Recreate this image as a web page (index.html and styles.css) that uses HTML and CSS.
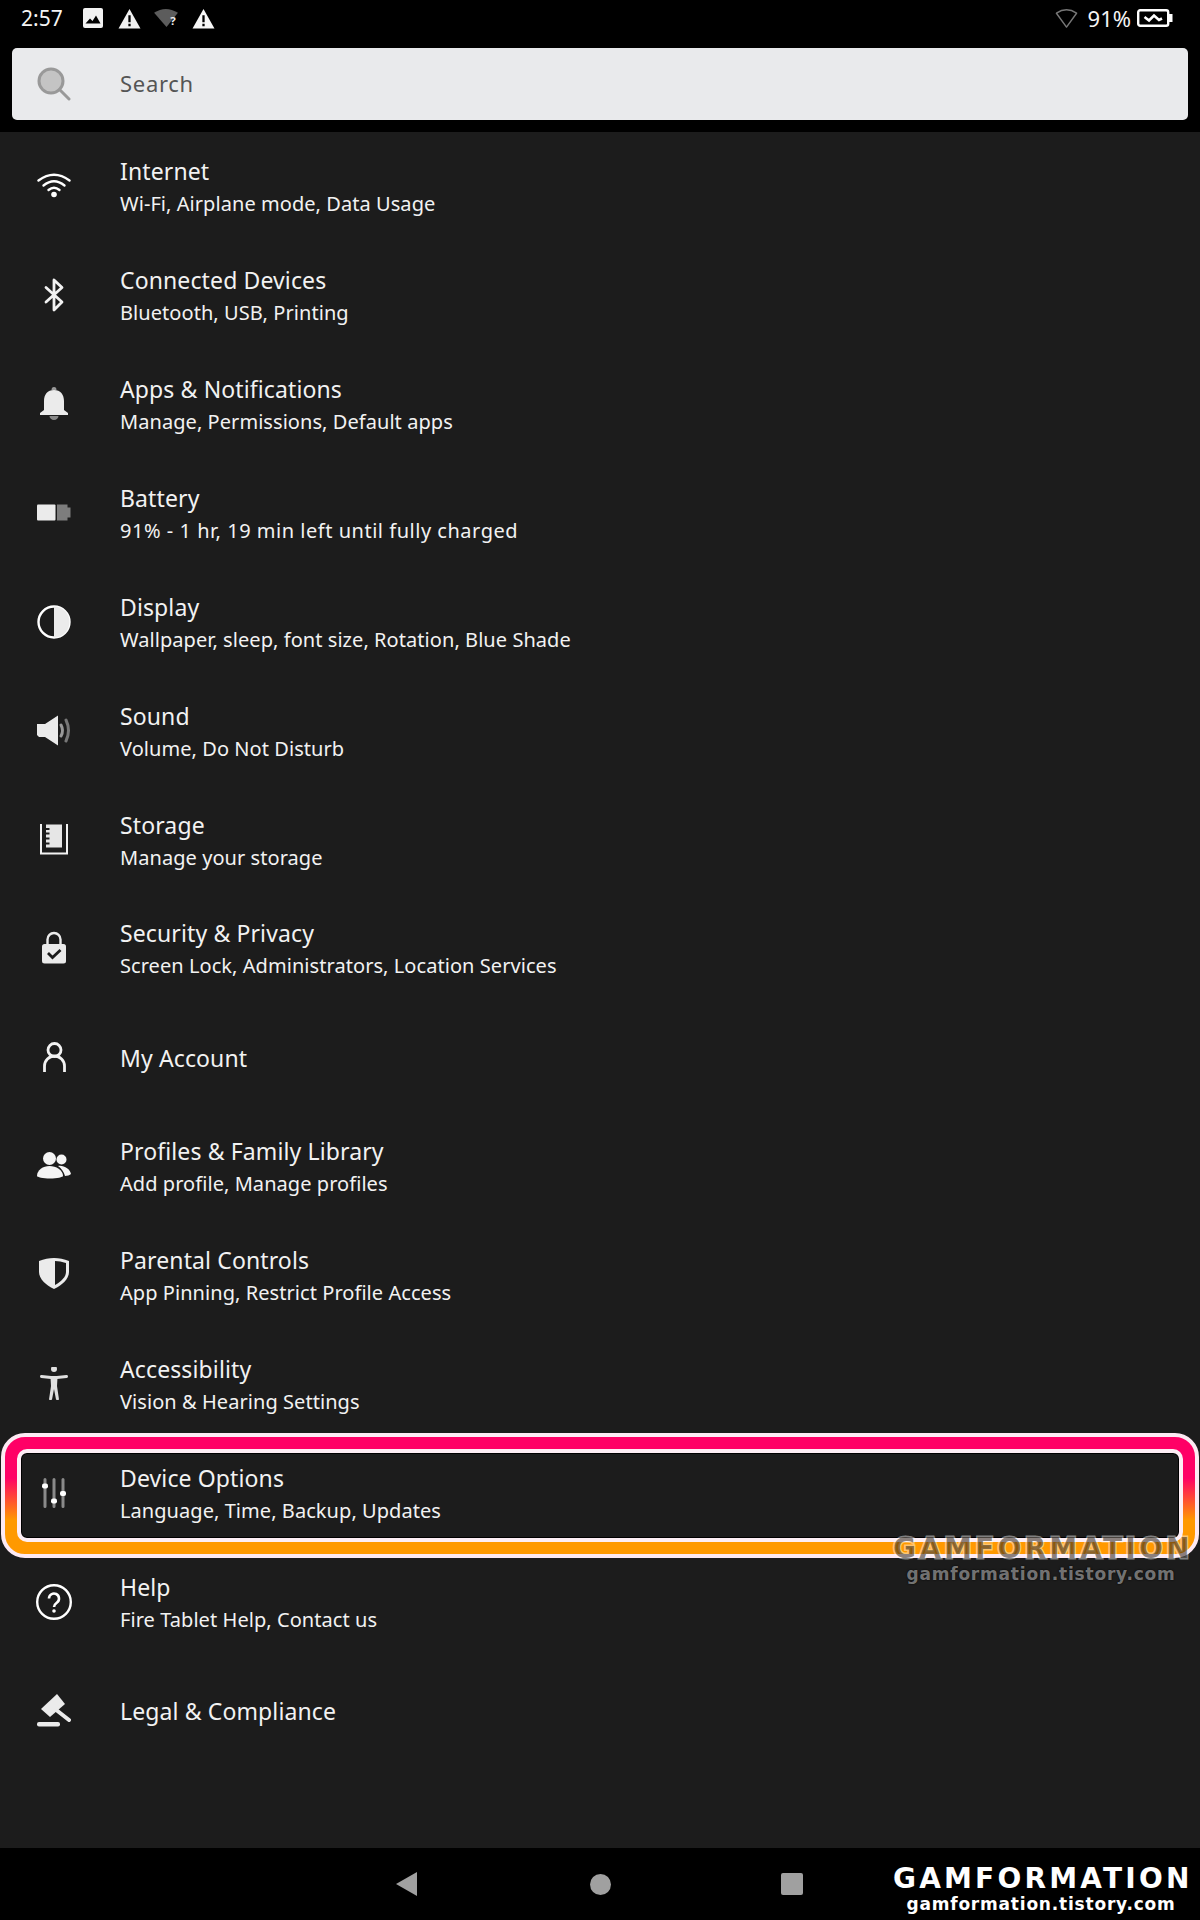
FILE: index.html
```html
<!DOCTYPE html>
<html lang="en">
<head>
<meta charset="utf-8">
<title>Settings</title>
<link rel="stylesheet" href="styles.css">
</head>
<body>
<div class="page">
  <header class="top">
    <div class="status">
      <span class="time">2:57</span>
      <svg class="si si-img" viewBox="0 0 20 20"><rect x="0" y="0" width="20" height="20" rx="2" fill="#f2f2f2"/><path d="M2.500 15.500l4.500-5 2.500 2.500 3.500-5.500 4.500 8z" fill="#000"/></svg>
      <svg class="si si-warn" viewBox="0 0 24 22"><path d="M12 1L23.500 21.500H.5z" fill="#f2f2f2"/><path d="M10.800 7.500h2.400v7.500h-2.400zM10.800 16.500h2.400v2.500h-2.400z" fill="#000"/></svg>
      <svg class="si si-wq" viewBox="0 0 26 22"><path d="M0 5Q12-3 25 5L13 20z" fill="#5c5c5c"/><text x="17" y="18" class="q">?</text></svg>
      <svg class="si si-warn2" viewBox="0 0 24 22"><path d="M12 1L23.500 21.500H.5z" fill="#f7f7f7"/><path d="M10.800 7.500h2.400v7.500h-2.400zM10.800 16.500h2.400v2.500h-2.400z" fill="#000"/></svg>
      <span class="spacer"></span>
      <svg class="si si-wifi" viewBox="0 0 24 22"><path d="M1.500 6Q12-1 22.500 6L12 20.500z" fill="none" stroke="#777" stroke-width="1.500" stroke-linejoin="round"/></svg>
      <span class="pct">91%</span>
      <svg class="si si-bat" viewBox="0 0 36 18"><rect x="1.200" y="1.200" width="30" height="15.600" rx="2" fill="none" stroke="#fff" stroke-width="2.400"/><rect x="32" y="5" width="3.500" height="8" fill="#fff"/><path d="M7.500 8l4.500 3.500 5-5 5 4.500 3-1.500" fill="none" stroke="#fff" stroke-width="2.600"/></svg>
    </div>
    <div class="search">
      <svg class="search-ico" viewBox="0 0 34 34"><circle cx="14" cy="14" r="12" fill="#c4c4c4" stroke="#999" stroke-width="3"/><path d="M22.500 22.500L32 32" stroke="#999" stroke-width="3" stroke-linecap="round"/></svg>
      <span class="search-text">Search</span>
    </div>
  </header>

  <main class="list">
    <div class="row">
      <svg class="ico" viewBox="0 0 34 34"><g fill="none" stroke="#fff" stroke-width="2.400" stroke-linecap="round"><path d="M1.500 11.500Q17 0 32.500 11.500"/><path d="M6.500 16.500Q17 8 27.500 16.500"/><path d="M11.500 21Q17 16.500 22.500 21"/></g><circle cx="17" cy="25.500" r="2.800" fill="#fff"/></svg>
      <div class="txt"><div class="t">Internet</div><div class="s">Wi-Fi, Airplane mode, Data Usage</div></div>
    </div>
    <div class="row">
      <svg class="ico" viewBox="0 0 34 34"><path d="M9 9.500L25 24L17 32V2L25 9.500L9 24" fill="none" stroke="#f2f2f2" stroke-width="2.800" stroke-linejoin="round" stroke-linecap="round"/></svg>
      <div class="txt"><div class="t">Connected Devices</div><div class="s">Bluetooth, USB, Printing</div></div>
    </div>
    <div class="row">
      <svg class="ico" viewBox="0 0 34 34"><path d="M17 3c-6.500 0-10 4.500-10 11v9l-4 3v2h28v-2l-4-3v-9c0-6.500-3.500-11-10-11z" fill="#ebebeb"/><path d="M14.500 3a2.500 3 0 0 1 5 0z" fill="#999"/><path d="M12.500 29h9a4.500 4 0 0 1-9 0z" fill="#888"/></svg>
      <div class="txt"><div class="t">Apps &amp; Notifications</div><div class="s">Manage, Permissions, Default apps</div></div>
    </div>
    <div class="row">
      <svg class="ico" viewBox="0 0 34 34"><rect x="0" y="8.500" width="18.500" height="16" rx="1" fill="#ebebeb"/><path d="M20 8.500h10.500v3h3v10h-3v3H20z" fill="#7d7d7d"/></svg>
      <div class="txt"><div class="t">Battery</div><div class="s s-wide">91% - 1 hr, 19 min left until fully charged</div></div>
    </div>
    <div class="row">
      <svg class="ico" viewBox="0 0 34 34"><circle cx="17" cy="17" r="15.500" fill="none" stroke="#fff" stroke-width="2.400"/><path d="M17 1.500a15.500 15.500 0 0 1 0 31z" fill="#ebebeb"/></svg>
      <div class="txt"><div class="t">Display</div><div class="s">Wallpaper, sleep, font size, Rotation, Blue Shade</div></div>
    </div>
    <div class="row">
      <svg class="ico" viewBox="0 0 34 34"><path d="M0 10h8L21 1.500v30L8 23H2l-2-2z" fill="#ebebeb"/><path d="M24 11q3 5.500 0 11" fill="none" stroke="#999" stroke-width="3" stroke-linecap="round"/><path d="M29 6q5 10.500 0 21" fill="none" stroke="#777" stroke-width="3" stroke-linecap="round"/></svg>
      <div class="txt"><div class="t">Sound</div><div class="s">Volume, Do Not Disturb</div></div>
    </div>
    <div class="row">
      <svg class="ico" viewBox="0 0 34 34"><path d="M4 1v29.500h26V1" fill="none" stroke="#f2f2f2" stroke-width="2"/><path d="M9 1.500h16v23H9v-3h3.500v-2H9v-3h3.500v-2H9v-3h3.500v-2H9V7h3.500V5H9z" fill="#e6e6e6"/></svg>
      <div class="txt"><div class="t">Storage</div><div class="s">Manage your storage</div></div>
    </div>
    <div class="row">
      <svg class="ico" viewBox="0 0 34 34"><path d="M10.500 15V8.500a6.500 6.500 0 0 1 13 0V15" fill="none" stroke="#ebebeb" stroke-width="2.400"/><rect x="5" y="13" width="24" height="19.500" rx="2.500" fill="#ebebeb"/><path d="M11 22l4.500 4.500 8-7.500" fill="none" stroke="#1a1a1a" stroke-width="2.800"/></svg>
      <div class="txt"><div class="t">Security &amp; Privacy</div><div class="s">Screen Lock, Administrators, Location Services</div></div>
    </div>
    <div class="row">
      <svg class="ico" viewBox="0 0 34 34"><circle cx="17.500" cy="10" r="6.500" fill="none" stroke="#f2f2f2" stroke-width="2.800"/><path d="M7.500 32V26a10 10 0 0 1 20 0v6" fill="none" stroke="#f2f2f2" stroke-width="2.800"/></svg>
      <div class="txt"><div class="t">My Account</div></div>
    </div>
    <div class="row">
      <svg class="ico" viewBox="0 0 34 34"><circle cx="12.500" cy="9.500" r="6.500" fill="#f5f5f5"/><circle cx="24.500" cy="10.500" r="5" fill="#f5f5f5"/><path d="M0 27c0-6 6-10 12.500-10S26 21 26 27c0 1-6 2.500-13 2.500S0 28 0 27z" fill="#f5f5f5"/><path d="M21 17c6-1 12 3 13 8-1 1-4 2-6 2-1-4-4-8-7-10z" fill="#f5f5f5"/></svg>
      <div class="txt"><div class="t">Profiles &amp; Family Library</div><div class="s">Add profile, Manage profiles</div></div>
    </div>
    <div class="row">
      <svg class="ico" viewBox="0 0 34 34"><path d="M17 0c5 0 10 1 15 3v11c0 7-7 13-15 17C9 27 2 21 2 14V3c5-2 10-3 15-3z" fill="#ebebeb"/><path d="M18 3c3.500 0 7 .7 11 2v9c0 5-5 9.500-11 13z" fill="#1c1c1c"/></svg>
      <div class="txt"><div class="t">Parental Controls</div><div class="s">App Pinning, Restrict Profile Access</div></div>
    </div>
    <div class="row">
      <svg class="ico" viewBox="0 0 34 34"><circle cx="17" cy="2" r="3" fill="#e0e0e0"/><path d="M4.500 9.500L14 10.500h6L29.500 9.500" fill="none" stroke="#e0e0e0" stroke-width="3" stroke-linecap="round"/><path d="M13.500 10.500h7L20 19l2 13.500q-1.500 1-3 0L17 22l-2 10.500q-1.500 1-3 0L14 19z" fill="#e0e0e0"/></svg>
      <div class="txt"><div class="t">Accessibility</div><div class="s">Vision &amp; Hearing Settings</div></div>
    </div>
    <div class="row row-hl">
      <div class="frame"></div>
      <svg class="ico" viewBox="0 0 34 34"><g stroke="#8a8a8a" stroke-width="3" stroke-linecap="round"><path d="M8 3.500V30.500M17 3.500V30.500M26 3.500V30.500"/></g><rect x="5" y="7.500" width="6" height="5" rx="2" fill="#fff"/><rect x="14" y="22.500" width="6" height="5" rx="2" fill="#fff"/><rect x="23" y="15" width="6" height="5" rx="2" fill="#fff"/></svg>
      <div class="txt"><div class="t">Device Options</div><div class="s">Language, Time, Backup, Updates</div></div>
    </div>
    <div class="row">
      <svg class="ico ico-over" viewBox="0 0 34 34"><circle cx="17" cy="17" r="16.800" fill="none" stroke="#fff" stroke-width="2.400"/><path d="M12 13.500a5 5 0 1 1 8 4c-2 1.500-3 2.500-3 4.500" fill="none" stroke="#fff" stroke-width="2.600"/><circle cx="17" cy="26" r="1.800" fill="#fff"/></svg>
      <div class="txt"><div class="t">Help</div><div class="s">Fire Tablet Help, Contact us</div></div>
    </div>
    <div class="row">
      <svg class="ico" viewBox="0 0 34 34"><path d="M20 1L28 11 13 24 4 16z" fill="#ebebeb"/><path d="M18 16L32 27" stroke="#ebebeb" stroke-width="4" stroke-linecap="round"/><rect x="0" y="29" width="23" height="4.500" rx="2" fill="#ebebeb"/></svg>
      <div class="txt"><div class="t">Legal &amp; Compliance</div></div>
    </div>
    <div class="wm wm-over"><div class="wm-a">GAMFORMATION</div><div class="wm-b">gamformation.tistory.com</div></div>
  </main>

  <footer class="nav">
    <svg class="nv nv-back" viewBox="0 0 21 24"><path d="M21 0v24L0 12z" fill="#a0a0a0"/></svg>
    <svg class="nv nv-home" viewBox="0 0 21 21"><circle cx="10.500" cy="10.500" r="10.500" fill="#a0a0a0"/></svg>
    <svg class="nv nv-rec" viewBox="0 0 22 22"><rect width="22" height="22" rx="2" fill="#a0a0a0"/></svg>
    <div class="wm wm-nav"><div class="wm-a">GAMFORMATION</div><div class="wm-b">gamformation.tistory.com</div></div>
  </footer>
</div>
</body>
</html>
```
FILE: styles.css
```css
* { box-sizing: border-box; }
html, body { margin: 0; padding: 0; }
body { background: #000; font-family: "Noto Sans", "Open Sans", sans-serif; color: #fff; }
.page { width: 1200px; height: 1920px; display: flex; flex-direction: column; overflow: hidden; }

.top { height: 132px; background: #000; flex: none; }
.status { height: 36px; display: flex; align-items: center; padding: 0 27px 0 21px; }
.time { font-size: 21px; color: #f4f4f4; width: 62px; }
.si { display: block; flex: none; }
.si-img { width: 20px; height: 20px; }
.si-warn { width: 23px; height: 21px; margin-left: 15px; }
.si-wq { width: 25px; height: 21px; margin-left: 13px; }
.si-warn2 { width: 23px; height: 21px; margin-left: 13px; }
.q { font-size: 12px; font-weight: 700; fill: #eee; font-family: "Noto Sans", sans-serif; }
.spacer { flex: 1; }
.si-wifi { width: 23px; height: 22px; margin-right: 10px; }
.pct { font-size: 22px; color: #f4f4f4; margin-right: 6px; }
.si-bat { width: 36px; height: 18px; }

.search { height: 72px; margin: 12px 12px 0; background: #e9eaec; border-radius: 5px; display: flex; align-items: center; padding-left: 25px; }
.search-ico { width: 34px; height: 34px; flex: none; }
.search-text { font-size: 22px; line-height: 30px; color: #555; margin: -2px 0 0 49px; letter-spacing: .7px; }

.list { position: relative; flex: 1; background: #1c1c1c; }
.row { position: relative; height: 108.86px; display: flex; align-items: center; padding-left: 37px; }
.ico { position: relative; width: 34px; height: 34px; flex: none; z-index: 1; }
.ico-over { overflow: visible; }
.txt { position: relative; margin-left: 49px; padding-top: 2px; z-index: 1; }
.t { font-size: 23px; line-height: 32px; color: #f2f2f2; letter-spacing: .12px; }
.s { font-size: 20px; line-height: 30px; margin-top: 2px; color: #f2f2f2; letter-spacing: .06px; }
.s-wide { letter-spacing: .52px; }

.frame { position: absolute; left: 1px; right: 1px; top: -5px; bottom: -11px; border: 4px solid #fdeaf3; border-radius: 24px; background: linear-gradient(180deg, #ff0066 0 36%, #ff9900 70%); background-origin: border-box; }
.frame::after { content: ""; position: absolute; left: 12px; right: 12px; top: 12px; bottom: 12px; background: #1c1c1c; border: 4px solid #fdeef5; border-radius: 10px; box-shadow: inset 0 0 0 1px #000; }

.wm { position: absolute; text-align: center; font-family: "DejaVu Sans", sans-serif; z-index: 2; white-space: nowrap; }
.wm-a { font-weight: 700; font-size: 28px; line-height: 31px; letter-spacing: 3.2px; }
.wm-b { font-weight: 700; font-size: 17px; line-height: 21px; letter-spacing: .8px; }
.wm-over { right: 11px; top: 1401px; width: 296px; }
.wm-over .wm-a { color: rgba(40,30,20,.55); -webkit-text-stroke: 3px rgba(255,255,255,.45); paint-order: stroke fill; }
.wm-over .wm-b { color: rgba(255,255,255,.45); text-shadow: 0 0 2px #000; }
.wm-nav { right: 11px; top: 15px; width: 296px; color: #fff; }

.nav { position: relative; height: 72px; flex: none; background: #000; }
.nv { position: absolute; display: block; }
.nv-back { left: 396px; top: 24px; width: 21px; height: 24px; }
.nv-home { left: 590px; top: 26px; width: 21px; height: 21px; }
.nv-rec { left: 781px; top: 25px; width: 22px; height: 22px; }
```
